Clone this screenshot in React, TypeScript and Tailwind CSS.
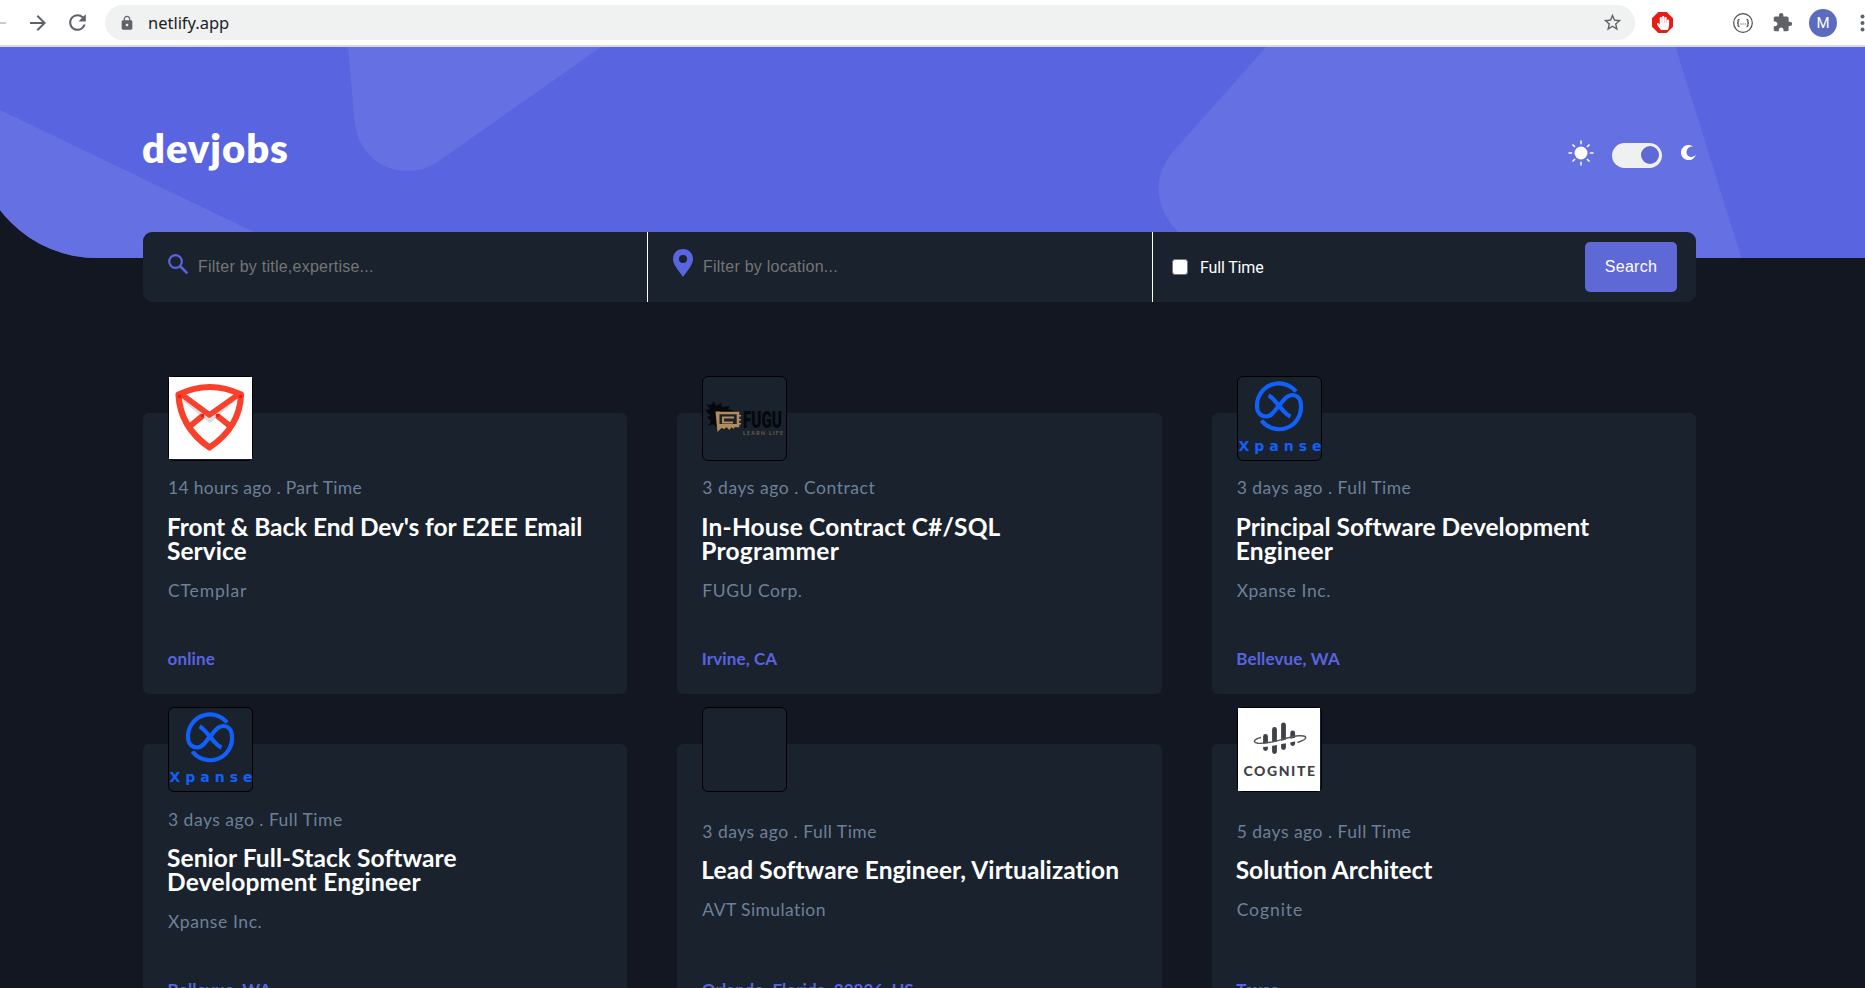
import React from "react";
import { MdLock, MdStarBorder, MdRefresh, MdArrowForward, MdExtension } from "react-icons/md";
import { FaHandPaper } from "react-icons/fa";

type Line = { text: string; cls: string };
type Job = { meta: Line; title: Line[]; company: Line; place: Line; logo: React.ReactNode };

const Ctemplar = () => (
  <svg viewBox="0 0 83 82" className="block h-[82px] w-[83px] bg-white">
    <path d="M15 23L41 44L65 23" fill="none" stroke="#dcdcdc" strokeWidth="3" />
    <path d="M9.500 17.500Q41 2.500 72 17.500Q71 50 40.500 70.500Q11 50 9.500 17.500Z" fill="none" stroke="#f8412c" strokeWidth="6.200" strokeLinejoin="round" />
    <path d="M12 17L40.500 38L70 17M20.500 49.500L34 38.500M61.500 49.500L48 38.500" fill="none" stroke="#f8412c" strokeWidth="5.800" strokeLinejoin="round" />
    <circle cx="10.500" cy="19.500" r="1.800" fill="#f4160f" />
    <circle cx="71.500" cy="19.500" r="1.800" fill="#f4160f" />
    <circle cx="33.500" cy="38.500" r="1.800" fill="#f4160f" />
    <circle cx="48.500" cy="38.500" r="1.800" fill="#f4160f" />
  </svg>
);

const Xpanse = () => (
  <svg viewBox="0 0 83 83" className="block size-[83px]">
    <g fill="none" stroke="#1260fb" strokeWidth="4.200">
      <path d="M58 14.500A22 22 0 0 0 19 29C19 36 23 39.500 28.500 39.500C34 39.500 36 34 40.700 29C46 23 48.500 18 54 18C59.500 18 63 22 63 29A22 22 0 0 1 23.500 43.500" />
      <path d="M30.500 18.500Q33 19.500 35.500 22.500L46.500 35Q49 38 52.500 39.500" />
    </g>
    <text x="0.500" y="73.500" textLength="83" fontFamily="DejaVu Sans" fontWeight="700" fontSize="14" fill="#1260fb">Xpanse</text>
  </svg>
);

const Fugu = () => (
  <svg viewBox="0 0 83 83" className="block size-[83px]">
    <path d="M3 27L8 28L11 24L13 29L18 26L19 30L27 29L25 32L35 35L14 36L13 50L10 47L5 49L8 44L4 40L8 39L2 33L7 32Z" fill="#06080b" />
    <path d="M15 36h20v13H17" fill="none" stroke="#b28d5b" strokeWidth="2.600" />
    <path d="M31 40.500H20v5H30" fill="none" stroke="#b28d5b" strokeWidth="2" />
    <path d="M12.500 34.500h4V47h18v3h-3l-1 2-2-2-2 3-3-3-2 2-3-1-4 4zM34 38h4v1.500h-4zM34 42h4v1.500h-4zM34 46h4v1.500h-4z" fill="#b28d5b" />
    <text x="40" y="51" textLength="39" lengthAdjust="spacingAndGlyphs" fontFamily="Roboto" fontWeight="900" fontSize="23" fill="#06080b">FUGU</text>
    <text x="40" y="57.500" textLength="40" fontFamily="Lato" fontWeight="700" fontSize="5" fill="#75634a">LEARN LIFE</text>
  </svg>
);

const Cognite = () => (
  <svg viewBox="0 0 82 83" className="block h-[83px] w-[82px] bg-white">
    <g stroke="#3f4146" strokeWidth="4.800" strokeLinecap="round">
      <path d="M27.500 28.500V40.500M36.500 21.500V43.500M45.500 17V39.500M54.700 25V35.500" />
    </g>
    <path d="M20 37.500C35 37.500 45 33.500 60 31" fill="none" stroke="#fff" strokeWidth="3.400" />
    <path d="M23 29.500C16 31 14 34.500 20 35.300C36 36 46 29.500 60 27.800C70 27 71 31 59.500 34.500" fill="none" stroke="#55575c" strokeWidth="1.400" />
    <text x="5.500" y="67.800" textLength="71.500" fontFamily="Lato" fontWeight="900" fontSize="14" fill="#3f4146">COGNITE</text>
  </svg>
);

const fullTime = "tracking-[0.49px]";
const fullTimeLow = "tracking-[0.49px] mt-px -mb-px";

const jobs: Job[] = [
  {
    meta: { text: "14 hours ago . Part Time", cls: "tracking-[0.3px]" },
    title: [
      { text: "Front & Back End Dev's for E2EE Email", cls: "tracking-[-0.11px]" },
      { text: "Service", cls: "tracking-[0.02px]" },
    ],
    company: { text: "CTemplar", cls: "tracking-[0.85px]" },
    place: { text: "online", cls: "tracking-[0.15px]" },
    logo: <Ctemplar />,
  },
  {
    meta: { text: "3 days ago . Contract", cls: "tracking-[0.55px]" },
    title: [
      { text: "In-House Contract C#/SQL", cls: "tracking-[0.17px]" },
      { text: "Programmer", cls: "tracking-[0.24px]" },
    ],
    company: { text: "FUGU Corp.", cls: "tracking-[0.55px]" },
    place: { text: "Irvine, CA", cls: "tracking-[0.1px]" },
    logo: <Fugu />,
  },
  {
    meta: { text: "3 days ago . Full Time", cls: fullTime },
    title: [
      { text: "Principal Software Development", cls: "tracking-[0.03px]" },
      { text: "Engineer", cls: "tracking-[0.2px]" },
    ],
    company: { text: "Xpanse Inc.", cls: "tracking-[0.6px]" },
    place: { text: "Bellevue, WA", cls: "tracking-[0.16px]" },
    logo: <Xpanse />,
  },
  {
    meta: { text: "3 days ago . Full Time", cls: fullTimeLow },
    title: [
      { text: "Senior Full-Stack Software", cls: "tracking-[0.08px]" },
      { text: "Development Engineer", cls: "tracking-[0.24px]" },
    ],
    company: { text: "Xpanse Inc.", cls: "tracking-[0.6px]" },
    place: { text: "Bellevue, WA", cls: "tracking-[0.16px]" },
    logo: <Xpanse />,
  },
  {
    meta: { text: "3 days ago . Full Time", cls: fullTimeLow },
    title: [{ text: "Lead Software Engineer, Virtualization", cls: "tracking-[0.08px]" }],
    company: { text: "AVT Simulation", cls: "tracking-[0.42px]" },
    place: { text: "Orlando, Florida, 32826, US", cls: "tracking-[0.08px]" },
    logo: null,
  },
  {
    meta: { text: "5 days ago . Full Time", cls: fullTimeLow },
    title: [{ text: "Solution Architect", cls: "tracking-[0px]" }],
    company: { text: "Cognite", cls: "tracking-[0.95px]" },
    place: { text: "Texas", cls: "" },
    logo: <Cognite />,
  },
];

function JobCard({ job }: { job: Job }) {
  return (
    <article className="flex h-[281px] flex-col rounded-[6px] bg-[#19222d] px-[25px]">
      <div className="-mt-[37px] size-[85px] shrink-0 rounded-[6px] border border-black bg-[#19222d]">{job.logo}</div>
      <div className="flex h-[157px] flex-col justify-center whitespace-nowrap">
        <p className={`text-[17.5px] leading-[20px] text-[#6e8098] ${job.meta.cls}`}>{job.meta.text}</p>
        <h2 className="mt-[17px] -ml-px text-[24.5px] leading-[24px] font-bold text-white">
          {job.title.map((t) => (
            <span key={t.text} className={`block ${t.cls}`}>{t.text}</span>
          ))}
        </h2>
        <p className={`mt-[18px] text-[17.5px] leading-[20px] text-[#6e8098] ${job.company.cls}`}>{job.company.text}</p>
      </div>
      <p className={`mt-[31px] -ml-[0.5px] text-[17px] leading-[20px] font-bold whitespace-nowrap text-[#5964e0] ${job.place.cls}`}>{job.place.text}</p>
    </article>
  );
}

function BrowserBar() {
  return (
    <div className="flex h-[47px] items-center border-b-2 border-[#dadadc] bg-white text-[#5f6368]">
      <div className="h-[2px] w-[6px] bg-[#c8cacc]" />
      <MdArrowForward className="ml-[20px] size-[24px] shrink-0" />
      <MdRefresh className="ml-[15px] size-[25px] shrink-0" />
      <div className="ml-[15px] flex h-[35px] w-[1530px] shrink-0 items-center rounded-full bg-[#f0f2f1]">
        <MdLock className="ml-[14px] size-[16px]" />
        <span className="ml-[13px] pt-px font-['Noto_Sans',sans-serif] text-[16.5px] tracking-[-0.02px] text-[#202124]">netlify.app</span>
        <MdStarBorder className="mr-[12px] ml-auto size-[21px]" />
      </div>
      <div className="ml-[17px] flex size-[21px] shrink-0 items-center justify-center bg-[#eb1a12] text-white [clip-path:polygon(30%_0,70%_0,100%_30%,100%_70%,70%_100%,30%_100%,0_70%,0_30%)]">
        <FaHandPaper className="size-[14px]" />
      </div>
      <svg viewBox="0 0 20 20" className="ml-[60px] size-[20px] shrink-0" fill="none" stroke="#4a4d51">
        <circle cx="10" cy="10" r="9.300" strokeWidth="1.200" />
        <path d="M6.500 6.500q-1.700 0-1.400 1.800q.2 1.700-1 1.700q1.200 0 1 1.700q-.3 1.800 1.400 1.800M13.500 6.500q1.700 0 1.400 1.800q-.2 1.700 1 1.700q-1.200 0-1 1.700q.3 1.800-1.400 1.800" strokeWidth="1.300" />
        <path d="M7.500 11h1M9.600 11h1M11.700 11h1" strokeWidth="1" />
      </svg>
      <MdExtension className="ml-[19px] size-[21px] shrink-0" />
      <div className="ml-[16px] flex size-[28px] shrink-0 items-center justify-center rounded-full bg-[#5c6bc0] pt-px font-['Roboto',sans-serif] text-[15px] text-white">M</div>
      <svg viewBox="0 0 5 20" className="ml-[23px] h-[20px] w-[5px] shrink-0" fill="#5f6368">
        <circle cx="2.500" cy="3.500" r="2" />
        <circle cx="2.500" cy="10" r="2" />
        <circle cx="2.500" cy="16.500" r="2" />
      </svg>
    </div>
  );
}

function Header() {
  return (
    <header className="relative h-[211px] shrink-0">
      <svg viewBox="0 0 1865 211" className="absolute inset-0 h-full w-full">
        <defs>
          <clipPath id="banner">
            <path d="M-25 0H1865V211H97A122 122 0 0 1 -25 89Z" />
          </clipPath>
        </defs>
        <g clipPath="url(#banner)">
          <rect width="1865" height="211" fill="#5964e0" />
          <g fill="#6570e3">
            <path d="M0 63L308 211H0Z" />
            <path d="M348 0L354.700 75C358 106 382 124 407 124Q425 124 439 114L601 0Z" />
            <path d="M1266 0L1171 107Q1158.500 123 1158.500 142Q1159 166 1179 186L1210 211H1741.400L1675.600 0Z" />
          </g>
        </g>
      </svg>
      <div className="relative mr-[169px] ml-[142px] flex items-center">
        <h1 className="mt-[76px] text-[40px] leading-[50px] font-extrabold tracking-[0.95px] text-white">devjobs</h1>
        <svg viewBox="0 0 26 26" className="mt-[85px] ml-auto size-[26px]">
          <circle cx="13" cy="13" r="6.500" fill="#fff" />
          <path d="M13 .5v3.700M13 21.800v3.700M.5 13h3.700M21.800 13h3.700M4.500 4.500l2.500 2.500M19 19l2.500 2.500M4.500 21.500l2.500-2.500M19 7l2.500-2.500" stroke="#fff" strokeWidth="1.500" />
        </svg>
        <div className="mt-[91px] ml-[18px] flex h-[25px] w-[50px] items-center justify-end rounded-full bg-[#eef1f0] pr-[3px]">
          <div className="-mt-[2px] size-[18px] rounded-full bg-[#5f69d6]" />
        </div>
        <svg viewBox="0 0 15 15" className="mt-[85px] ml-[19px] size-[15px]">
          <path d="M8.500 0A7.600 7.600 0 1 0 15 9.200A5 5 0 0 1 5.500 7.500A5.600 5.600 0 0 1 12 1.600A8 8 0 0 0 8.500 0Z" fill="#fff" />
        </svg>
      </div>
    </header>
  );
}

function SearchBar() {
  return (
    <form className="relative mr-[169px] -mt-[26px] ml-[143px] flex h-[70px] overflow-hidden rounded-[9px] bg-[#19222d] font-['Liberation_Sans',sans-serif] text-[16px]">
      <label className="flex w-[505px] items-center border-r border-white pl-[25px]">
        <svg viewBox="0 0 20 20" className="-mt-[6px] size-[20px]" fill="none" stroke="#5964e0" strokeWidth="2.200">
          <circle cx="7.500" cy="7.500" r="6.300" />
          <path d="M12 12l7.300 7.300" strokeWidth="2.600" />
        </svg>
        <input placeholder="Filter by title,expertise..." className="ml-[10px] w-[300px] bg-transparent tracking-[0.24px] outline-none placeholder:text-[#757575]" />
      </label>
      <label className="flex w-[505px] items-center border-r border-white pl-[25px]">
        <svg viewBox="0 0 20 28" className="-mt-[8px] h-[28px] w-[20px]">
          <path fillRule="evenodd" d="M10 0C4 0 0 4.300 0 10C0 16 6 22 10 28C14 22 20 16 20 10C20 4.300 16 0 10 0ZM10 6A4 4 0 1 1 10 14A4 4 0 1 1 10 6Z" fill="#5964e0" />
        </svg>
        <input placeholder="Filter by location..." className="ml-[10px] w-[300px] bg-transparent tracking-[0.24px] outline-none placeholder:text-[#757575]" />
      </label>
      <div className="flex flex-1 items-center pr-[19px] pl-[19px]">
        <div className="size-[16px] rounded-[3px] border border-[#767676] bg-white" />
        <span className="ml-[12px] pt-px font-['Roboto',sans-serif] text-[16px] tracking-[-0.15px] text-white">Full Time</span>
        <button type="button" className="ml-auto h-[50px] w-[92px] rounded-[5px] bg-[#5f69d6] tracking-[0.3px] text-white">Search</button>
      </div>
    </form>
  );
}

export default function App() {
  return (
    <div className="h-[988px] overflow-hidden bg-[#121721] font-['Lato',sans-serif]">
      <BrowserBar />
      <Header />
      <SearchBar />
      <main className="mt-[111px] mr-[169px] ml-[143px] grid grid-cols-3 gap-[50px]">
        {jobs.map((j, i) => (
          <JobCard key={i} job={j} />
        ))}
      </main>
    </div>
  );
}
